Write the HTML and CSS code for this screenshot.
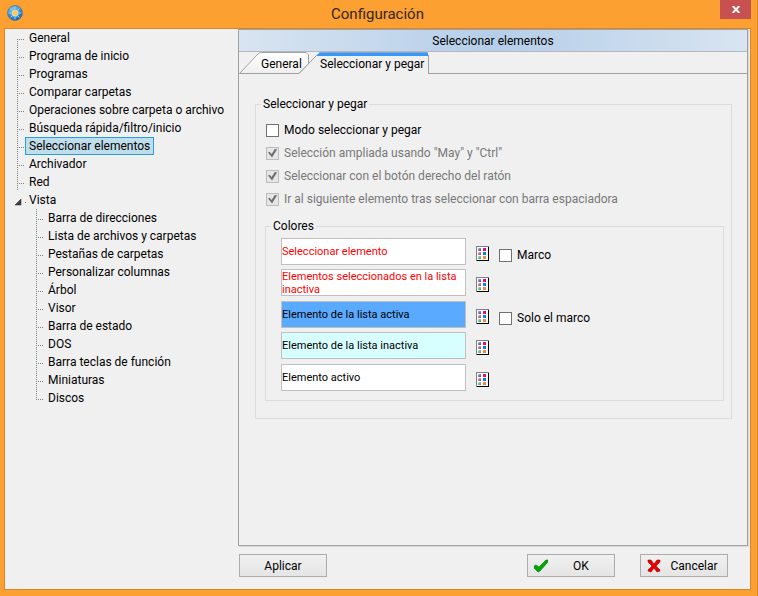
FILE: index.html
```html
<!DOCTYPE html>
<html lang="es">
<head>
<meta charset="utf-8">
<title>Configuración</title>
<link rel="stylesheet" href="styles.css">
</head>
<body>
<svg width="0" height="0" class="defs" aria-hidden="true">
  <defs>
    <radialGradient id="ball" cx="40%" cy="30%" r="70%"><stop offset="0" stop-color="#8fd4fa"/><stop offset=".55" stop-color="#3a9be6"/><stop offset="1" stop-color="#1a5fae"/></radialGradient>
    <linearGradient id="tabfill" x1="0" y1="0" x2="0" y2="1"><stop offset="0" stop-color="#ffffff"/><stop offset="1" stop-color="#efefef"/></linearGradient>
    <linearGradient id="navy" x1="0" y1="0" x2="1" y2="1"><stop offset="0" stop-color="#b8c0ea"/><stop offset="1" stop-color="#2c3f92"/></linearGradient>
    <linearGradient id="wine" x1="0" y1="0" x2="1" y2="1"><stop offset="0" stop-color="#efc0cc"/><stop offset="1" stop-color="#a03458"/></linearGradient>
    <linearGradient id="leaf" x1="0" y1="0" x2="1" y2="1"><stop offset="0" stop-color="#b4f0c8"/><stop offset="1" stop-color="#1f9e58"/></linearGradient>
    <symbol id="palette" viewBox="0 0 13 15">
      <rect width="13" height="15" fill="#000"/>
      <path d="M0 0h13v1H1v14H0z" fill="#808080"/>
      <rect x="1" y="1" width="11" height="13" fill="#fff"/>
      <rect x="2" y="2" width="3" height="3" fill="url(#navy)"/>
      <rect x="2" y="6" width="3" height="3" fill="url(#wine)"/>
      <rect x="2" y="10" width="3" height="3" fill="url(#leaf)"/>
      <rect x="7" y="2" width="3" height="3" fill="#f0047f"/>
      <rect x="7" y="6" width="3" height="3" fill="#0080ff"/>
      <rect x="7" y="10" width="3" height="3" fill="#ff8040"/>
    </symbol>
  </defs>
</svg>
<div class="window">
  <header class="titlebar">
    <svg class="app-icon" width="16" height="16" viewBox="0 0 16 16" aria-hidden="true">
      <circle cx="8" cy="8" r="7.5" fill="url(#ball)" stroke="#77746a" stroke-width=".8"/>
      <path d="M8 1.500v13M1.500 8h13M3.500 3.500l9 9M12.500 3.500l-9 9" stroke="#8fd0fa" stroke-width="1"/>
      <circle cx="8" cy="8" r="4.200" fill="#5eb4ef"/>
      <circle cx="8" cy="8" r="3" fill="#ffc95c" stroke="#f0dfa8" stroke-width=".8"/>
    </svg>
    <h1 class="title">Configuración</h1>
    <button class="close" type="button" aria-label="Cerrar">
      <svg width="8" height="7" viewBox="0 0 8 7"><path d="M.7 0L7.300 7M7.300 0L.7 7" stroke="#fff" stroke-width="2"/></svg>
    </button>
  </header>
  <div class="client">
    <nav class="sidebar">
      <ul class="tree">
        <li class="node first"><a href="#">General</a></li>
        <li class="node"><a href="#">Programa de inicio</a></li>
        <li class="node"><a href="#">Programas</a></li>
        <li class="node"><a href="#">Comparar carpetas</a></li>
        <li class="node"><a href="#">Operaciones sobre carpeta o archivo</a></li>
        <li class="node"><a href="#">Búsqueda rápida/filtro/inicio</a></li>
        <li class="node"><a href="#" class="selected" aria-current="page">Seleccionar elementos</a></li>
        <li class="node"><a href="#">Archivador</a></li>
        <li class="node"><a href="#">Red</a></li>
        <li>
          <details open>
            <summary class="branch">
              <svg width="12" height="18" viewBox="0 0 12 18" aria-hidden="true"><path d="M6 8v6H0z" fill="#404040" stroke="#262626" stroke-width=".5"/><path d="M10 11h1v1h-1z" fill="#808080"/></svg>
              <span>Vista</span>
            </summary>
            <ul class="tree nested">
              <li class="node"><a href="#">Barra de direcciones</a></li>
              <li class="node"><a href="#">Lista de archivos y carpetas</a></li>
              <li class="node"><a href="#">Pestañas de carpetas</a></li>
              <li class="node"><a href="#">Personalizar columnas</a></li>
              <li class="node"><a href="#">Árbol</a></li>
              <li class="node"><a href="#">Visor</a></li>
              <li class="node"><a href="#">Barra de estado</a></li>
              <li class="node"><a href="#">DOS</a></li>
              <li class="node"><a href="#">Barra teclas de función</a></li>
              <li class="node"><a href="#">Miniaturas</a></li>
              <li class="node last"><a href="#">Discos</a></li>
            </ul>
          </details>
        </li>
      </ul>
    </nav>
    <main class="main">
      <section class="panel">
        <h2 class="heading">Seleccionar elementos</h2>
        <div class="tabs" role="tablist">
          <button class="tab tab-general" type="button" role="tab" aria-selected="false">
            <svg width="70" height="22" viewBox="0 0 70 22" aria-hidden="true"><path d="M.5 21.500L19 2Q20.500 .5 22.500 .5H67L69.500 3V12L60 21.500z" fill="url(#tabfill)" stroke="#a0a0a0"/></svg>
            <span>General</span>
          </button>
          <button class="tab tab-paste" type="button" role="tab" aria-selected="true">
            <svg width="130" height="22" viewBox="0 0 130 22" aria-hidden="true"><path d="M0 22L20.500 .5H128L129.500 3V22z" fill="#f0f0f0"/><path d="M0 21.500L17.500 3.500M129.500 3V22" fill="none" stroke="#a0a0a0"/><path d="M17 4L21 0H128L129 1V4z" fill="#3399ff"/><path d="M20.500 .5H128" stroke="#90a4bc"/></svg>
            <span>Seleccionar y pegar</span>
          </button>
          <div class="tab-rest"></div>
        </div>
        <div class="page">
          <fieldset class="group">
            <legend>Seleccionar y pegar</legend>
            <div class="options">
              <label class="check"><input type="checkbox">Modo seleccionar y pegar</label>
              <label class="check off"><input type="checkbox" checked disabled>Selección ampliada usando "May" y "Ctrl"</label>
              <label class="check off"><input type="checkbox" checked disabled>Seleccionar con el botón derecho del ratón</label>
              <label class="check off"><input type="checkbox" checked disabled>Ir al siguiente elemento tras seleccionar con barra espaciadora</label>
            </div>
            <fieldset class="group colors">
              <legend>Colores</legend>
              <div class="color-grid">
                <div class="sample red">Seleccionar elemento</div>
                <button class="pick" type="button" aria-label="Color"><svg width="13" height="15"><use href="#palette"/></svg></button>
                <label class="check"><input type="checkbox">Marco</label>
                <div class="sample red">Elementos seleccionados en la lista inactiva</div>
                <button class="pick" type="button" aria-label="Color"><svg width="13" height="15"><use href="#palette"/></svg></button>
                <span></span>
                <div class="sample active">Elemento de la lista activa</div>
                <button class="pick" type="button" aria-label="Color"><svg width="13" height="15"><use href="#palette"/></svg></button>
                <label class="check"><input type="checkbox">Solo el marco</label>
                <div class="sample inactive">Elemento de la lista inactiva</div>
                <button class="pick" type="button" aria-label="Color"><svg width="13" height="15"><use href="#palette"/></svg></button>
                <span></span>
                <div class="sample">Elemento activo</div>
                <button class="pick" type="button" aria-label="Color"><svg width="13" height="15"><use href="#palette"/></svg></button>
                <span></span>
              </div>
            </fieldset>
          </fieldset>
        </div>
      </section>
      <footer class="actions">
        <button class="btn apply" type="button">Aplicar</button>
        <button class="btn icon-btn" type="button">
          <svg width="14" height="14" viewBox="0 0 14 14" aria-hidden="true"><path d="M0 7L2 6L5 8L12 1H14V3L6 12L4 13L0 9z" fill="#00a800" stroke="#007800" stroke-width=".6"/></svg>
          <span>OK</span>
        </button>
        <button class="btn icon-btn" type="button">
          <svg width="14" height="14" viewBox="0 0 14 14" aria-hidden="true"><path d="M1 1H4L7 5L10 1H13V3L9 7L13 11V12L10 13L7 9L4 13L1 12V11L5 7L1 3z" fill="#e80000" stroke="#a80000" stroke-width=".6"/></svg>
          <span>Cancelar</span>
        </button>
      </footer>
    </main>
  </div>
</div>
</body>
</html>
```
FILE: styles.css
```css
* { box-sizing: border-box; }
body {
  margin: 0;
  font: 12px/18px Roboto, "Open Sans", sans-serif;
  color: #000;
}
.defs { position: absolute; }
button { font: inherit; color: inherit; padding: 0; border: 0; background: none; }
a { color: inherit; text-decoration: none; }
ul { list-style: none; margin: 0; padding: 0; }

.window {
  min-height: 100vh;
  display: flex;
  flex-direction: column;
  background: #fca032;
  padding: 0 6px 6px 4px;
  border-right: 1px solid #d4872c;
}
.titlebar {
  height: 28px;
  display: grid;
  grid-template-columns: 31px 1fr 31px;
  align-items: start;
}
.app-icon { margin: 5px 0 0 3px; }
.title {
  margin: 0;
  padding-top: 4px;
  font-size: 15px;
  line-height: 20px;
  font-weight: 400;
  text-align: center;
  color: #33261a;
}
.close {
  height: 19px;
  background: #c75050;
  display: flex;
  align-items: center;
  justify-content: center;
}

.client {
  flex: 1;
  display: grid;
  grid-template-columns: 233px 1fr;
  background: #f0f0f0;
  border: 1px solid #d4872c;
}

.sidebar { padding-left: 12px; }
.node { display: flex; height: 18px; }
.node::before {
  content: "";
  width: 8px;
  background:
    repeating-linear-gradient(90deg, #808080 0 1px, transparent 1px 2px) 0 10px / 8px 1px no-repeat,
    repeating-linear-gradient(#808080 0 1px, transparent 1px 2px) 0 0 / 1px 18px no-repeat;
}
.node.first::before { background-position: 0 10px, 0 10px; }
.node.last::before { background-size: 8px 1px, 1px 10px; }
.node a {
  padding: 0 3px;
  line-height: 16px;
  border: 1px solid transparent;
  white-space: nowrap;
}
.node a.selected { background: #c0ddeb; border-color: #26a0da; }
.branch { display: flex; list-style: none; height: 18px; margin-left: -2px; gap: 2px; }
.nested { padding-left: 19px; }

.main { display: flex; flex-direction: column; min-width: 0; }
.panel {
  flex: 1;
  margin-right: 2px;
  border: 1px solid #a0a0a0;
  box-shadow: 1px 1px 0 #dadada;
}
.heading {
  margin: 0;
  height: 22px;
  line-height: 22px;
  font-size: 12px;
  font-weight: 400;
  text-align: center;
  background: linear-gradient(90deg, #d8e4f1, #b5cee9 50%, #d8e4f1);
  border-bottom: 1px solid #b4b8be;
}
.tabs { display: flex; height: 22px; }
.tab { display: grid; }
.tab svg, .tab span { grid-area: 1 / 1; display: block; }
.tab span { line-height: 24px; text-align: left; white-space: nowrap; }
.tab-general { width: 70px; }
.tab-general span { padding-left: 22px; }
.tab-paste { width: 130px; margin-left: -10px; }
.tab-paste span { padding-left: 21px; }
.tab-rest { flex: 1; border-bottom: 1px solid #a0a0a0; }

.page { padding: 21px 15px 0 16px; }
.group {
  margin: 0;
  min-width: 0;
  border: 1px solid #dcdcdc;
  padding: 8px 7px 17px 9px;
}
.group legend { padding: 0 2px; margin-left: -4px; line-height: 18px; }
.options { display: flex; flex-direction: column; gap: 5px; padding-left: 1px; }
.check { display: flex; align-items: center; gap: 5px; white-space: nowrap; }
.check input {
  appearance: none;
  width: 13px;
  height: 13px;
  margin: 0;
  background: #fff;
  border: 1px solid #707070;
  display: grid;
  place-items: center;
}
.check.off { color: #787878; }
.check.off input { background: #e6e6e6; border-color: #bcbcbc; }
.check input:checked::before {
  content: "";
  width: 9px;
  height: 9px;
  background: #707070;
  clip-path: polygon(0 45%, 18% 35%, 40% 60%, 80% 0, 100% 12%, 45% 100%);
}

.colors { margin-top: 9px; padding: 3px 15px 9px; }
.colors legend { margin-left: -10px; }
.color-grid {
  display: grid;
  grid-template-columns: 185px 13px 1fr;
  grid-template-rows: repeat(2, 31px 32px) 27px;
  column-gap: 10px;
}
.sample {
  height: 27px;
  display: flex;
  align-items: center;
  background: #fff;
  border: 1px solid #c0c0c0;
  font-size: 11px;
  line-height: 13px;
}
.red { color: #f00; }
.active { background: #5aaaff; }
.inactive { background: #d8ffff; }
.pick { height: 15px; margin-top: 8px; }
.pick svg { display: block; }
.color-grid .check { height: 18px; margin-top: 8px; }

.actions { display: flex; padding: 8px 22px 12px 1px; gap: 25px; }
.btn {
  width: 88px;
  height: 23px;
  border: 1px solid #acacac;
  background: linear-gradient(#f0f0f0, #e5e5e5);
}
.apply { margin-right: auto; }
.icon-btn { display: flex; align-items: center; padding-left: 6px; }
.icon-btn span { flex: 1; text-align: center; }
```
